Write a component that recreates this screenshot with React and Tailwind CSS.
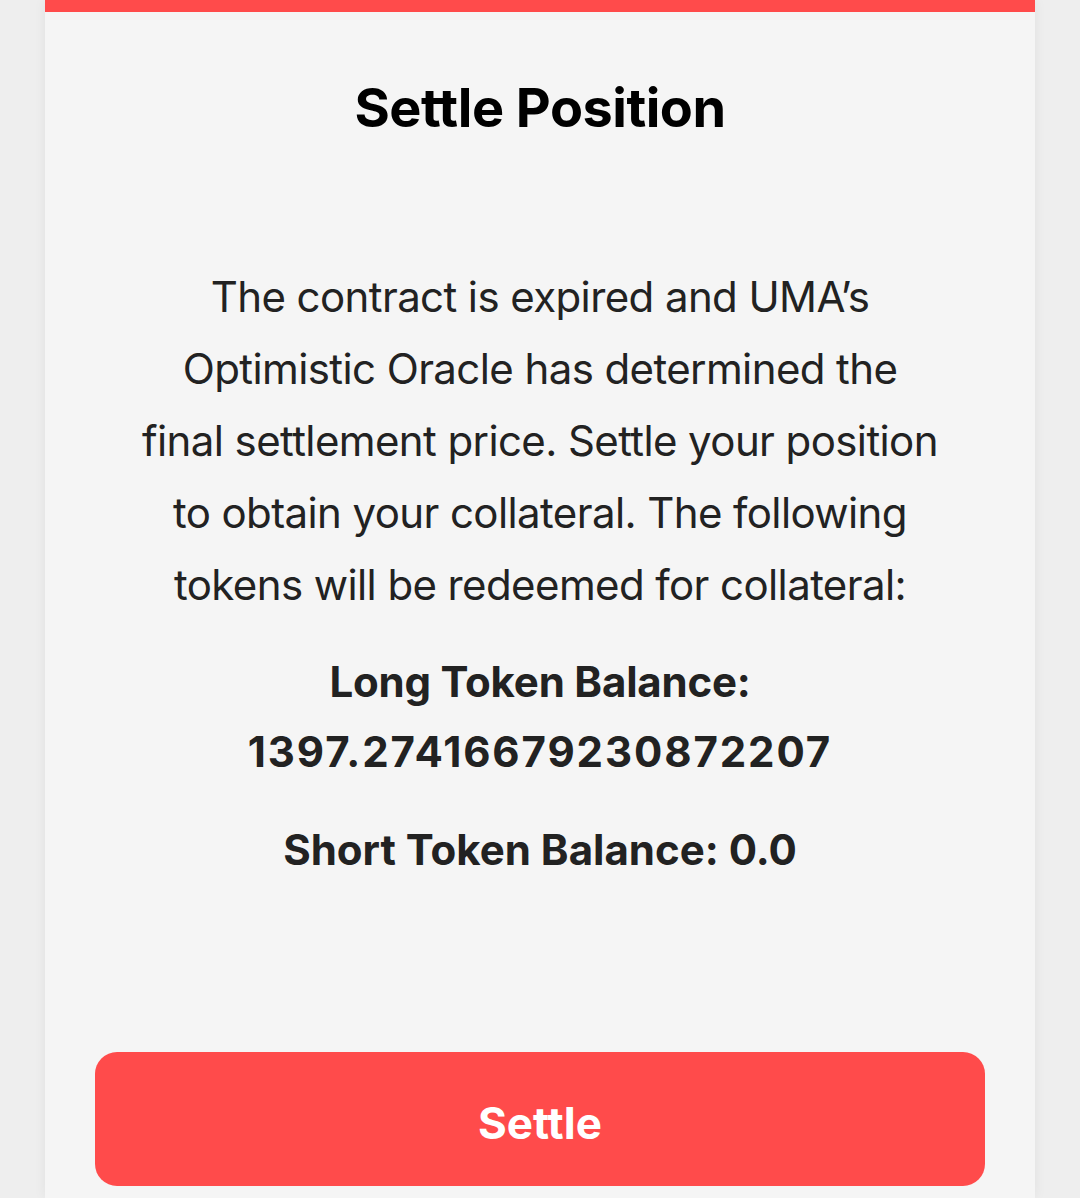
import React from 'react';

const lines = [
  'The contract is expired and UMA’s',
  'Optimistic Oracle has determined the',
  'final settlement price. Settle your position',
  'to obtain your collateral. The following',
  'tokens will be redeemed for collateral:',
];

const App = () => {
  return (
    <div className="min-h-screen bg-[#eeeeee] font-['Inter',sans-serif]">
      <div className="mx-[45px] bg-[#f5f5f5] shadow-[0_0_12px_rgba(0,0,0,0.06)] min-h-[1198px]">
        <div className="h-3 bg-[#ff4b4b]" />
        <div className="px-[50px] pt-[64px] flex flex-col items-center text-center">
          <h1 className="text-[54px] leading-[64px] font-bold text-black tracking-[-0.5px]">Settle Position</h1>

          <p className="mt-[121px] text-[42px] leading-[72px] text-[#222222] tracking-[-0.6px]">
            {lines.map((l) => (
              <span key={l} className="block whitespace-nowrap">{l}</span>
            ))}
          </p>

          <p className="mt-[26px] text-[42px] leading-[70px] font-bold text-[#222222]">
            <span className="block tracking-[-0.2px]">Long Token Balance:</span>
            <span className="block tracking-[1.9px]">1397.27416679230872207</span>
          </p>
          <p className="mt-[27px] text-[42px] leading-[72px] font-bold text-[#222222]">
            Short Token Balance: 0.0
          </p>

          <button className="mt-[166px] w-full h-[134px] pt-[8px] rounded-[22px] bg-[#ff4b4b] text-white text-[44px] font-bold">
            Settle
          </button>
        </div>
      </div>
    </div>
  );
};

export default App;
